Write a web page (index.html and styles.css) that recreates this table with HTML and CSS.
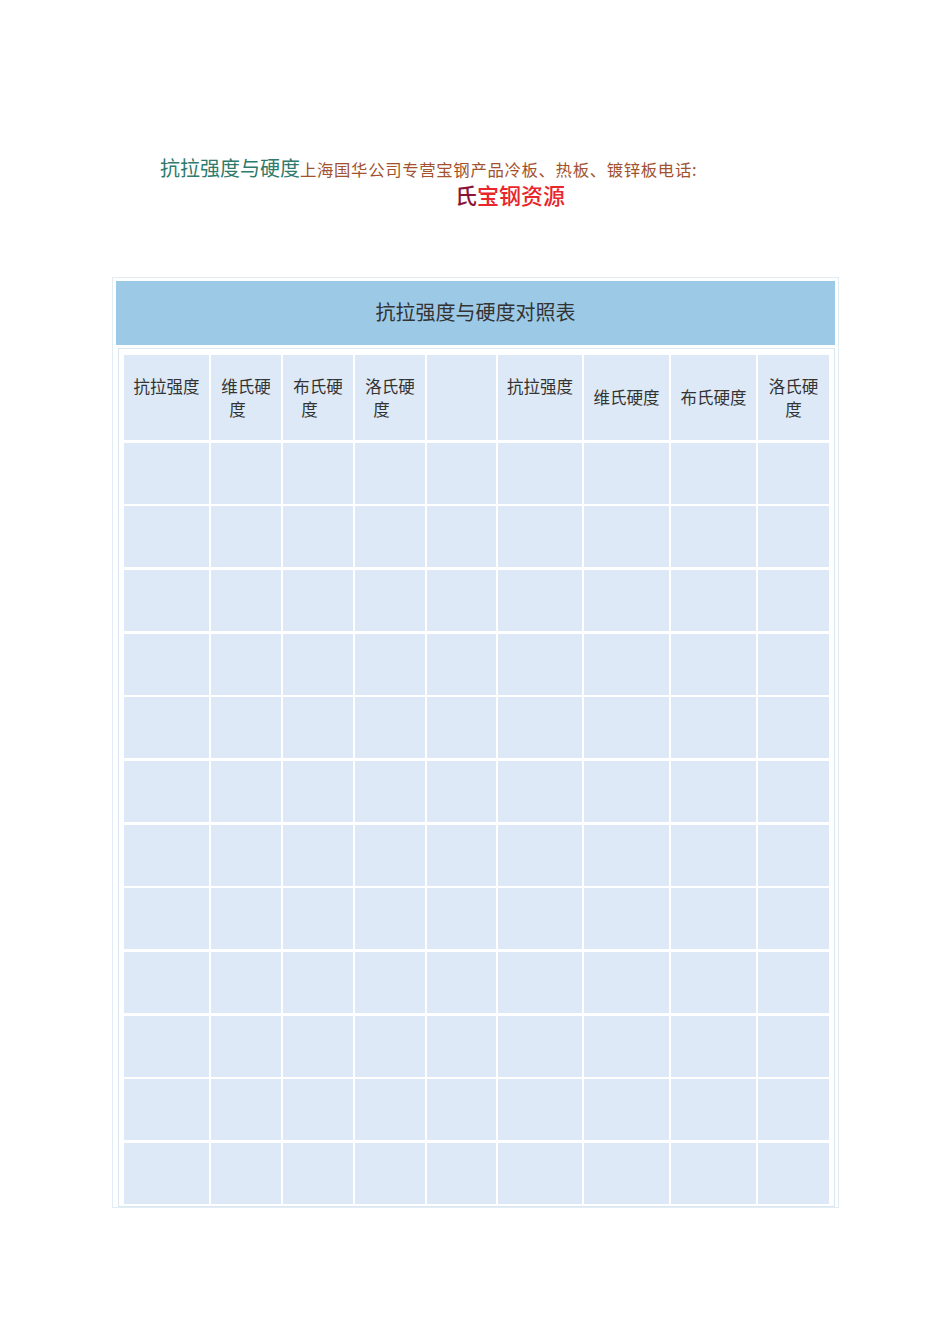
FILE: index.html
```html
<!DOCTYPE html>
<html lang="zh-CN">
<head>
<meta charset="utf-8">
<title>抗拉强度与硬度对照表</title>
<link rel="stylesheet" href="styles.css">
</head>
<body>
<div class="intro">
  <p class="line1"><span class="green">抗拉强度与硬度</span><span class="brown">上海国华公司专营宝钢产品冷板、热板、镀锌板电话:</span></p>
  <p class="line2"><span class="dark">氏</span>宝钢资源</p>
</div>

<div class="sheet">
  <div class="caption">抗拉强度与硬度对照表</div>
  <div class="wrap">
    <div class="grid">
      <div class="cell head top"><span>抗拉强度</span></div>
      <div class="cell head"><span>维氏硬<br><span class="sh">度</span></span></div>
      <div class="cell head"><span>布氏硬<br><span class="sh">度</span></span></div>
      <div class="cell head"><span>洛氏硬<br><span class="sh">度</span></span></div>
      <div class="cell head"></div>
      <div class="cell head top"><span>抗拉强度</span></div>
      <div class="cell head"><span>维氏硬度</span></div>
      <div class="cell head"><span>布氏硬度</span></div>
      <div class="cell head"><span>洛氏硬<br>度</span></div>

      <div class="cell"></div><div class="cell"></div><div class="cell"></div><div class="cell"></div><div class="cell"></div><div class="cell"></div><div class="cell"></div><div class="cell"></div><div class="cell"></div>
      <div class="cell"></div><div class="cell"></div><div class="cell"></div><div class="cell"></div><div class="cell"></div><div class="cell"></div><div class="cell"></div><div class="cell"></div><div class="cell"></div>
      <div class="cell"></div><div class="cell"></div><div class="cell"></div><div class="cell"></div><div class="cell"></div><div class="cell"></div><div class="cell"></div><div class="cell"></div><div class="cell"></div>
      <div class="cell"></div><div class="cell"></div><div class="cell"></div><div class="cell"></div><div class="cell"></div><div class="cell"></div><div class="cell"></div><div class="cell"></div><div class="cell"></div>
      <div class="cell"></div><div class="cell"></div><div class="cell"></div><div class="cell"></div><div class="cell"></div><div class="cell"></div><div class="cell"></div><div class="cell"></div><div class="cell"></div>
      <div class="cell"></div><div class="cell"></div><div class="cell"></div><div class="cell"></div><div class="cell"></div><div class="cell"></div><div class="cell"></div><div class="cell"></div><div class="cell"></div>
      <div class="cell"></div><div class="cell"></div><div class="cell"></div><div class="cell"></div><div class="cell"></div><div class="cell"></div><div class="cell"></div><div class="cell"></div><div class="cell"></div>
      <div class="cell"></div><div class="cell"></div><div class="cell"></div><div class="cell"></div><div class="cell"></div><div class="cell"></div><div class="cell"></div><div class="cell"></div><div class="cell"></div>
      <div class="cell"></div><div class="cell"></div><div class="cell"></div><div class="cell"></div><div class="cell"></div><div class="cell"></div><div class="cell"></div><div class="cell"></div><div class="cell"></div>
      <div class="cell"></div><div class="cell"></div><div class="cell"></div><div class="cell"></div><div class="cell"></div><div class="cell"></div><div class="cell"></div><div class="cell"></div><div class="cell"></div>
      <div class="cell"></div><div class="cell"></div><div class="cell"></div><div class="cell"></div><div class="cell"></div><div class="cell"></div><div class="cell"></div><div class="cell"></div><div class="cell"></div>
      <div class="cell"></div><div class="cell"></div><div class="cell"></div><div class="cell"></div><div class="cell"></div><div class="cell"></div><div class="cell"></div><div class="cell"></div><div class="cell"></div>
    </div>
  </div>
</div>
</body>
</html>
```

FILE: styles.css
```css
html, body {
  margin: 0;
  padding: 0;
  background: #ffffff;
}

body {
  font-family: "Noto Sans CJK SC", "Noto Sans", sans-serif;
  color: #333333;
}

.intro {
  padding-top: 155px;
  height: 277px;
  box-sizing: border-box;
}

.line1 {
  margin: 0 0 0 160px;
  line-height: 26px;
  white-space: nowrap;
}

.green {
  color: #2e7a6c;
  font-size: 20px;
}

.brown {
  color: #a2522f;
  font-size: 16.4px;
  letter-spacing: 0.65px;
}

.line2 {
  margin: 0 0 0 455px;
  line-height: 24px;
  font-size: 22px;
  color: #e8262c;
  font-weight: 500;
}

.dark {
  color: #8a1436;
}

.sheet {
  margin-left: 112px;
  width: 727px;
  box-sizing: border-box;
  border: 1px solid #e2ecf4;
  padding: 3px 3px 0 3px;
}

.caption {
  height: 64px;
  padding-bottom: 4px;
  box-sizing: border-box;
  background: #9cc9e6;
  display: flex;
  align-items: center;
  justify-content: center;
  font-size: 20px;
  color: #333333;
}

.wrap {
  margin: 3px 0 0 2px;
  border: 1px solid #dae7f2;
  padding: 6px 5px 2px 5px;
}

.grid {
  display: grid;
  grid-template-columns: 85px 70px 70px 70px 69px 84px 85px 85px 71px;
  grid-template-rows: 85px;
  grid-auto-rows: 61px;
  column-gap: 2px;
  row-gap: 2.67px;
}

.cell {
  background: #dde9f6;
}

.head {
  display: flex;
  align-items: center;
  justify-content: center;
  text-align: center;
  font-size: 16.5px;
  line-height: 23px;
  color: #333333;
}

.head.top {
  align-items: flex-start;
  padding-top: 20px;
  box-sizing: border-box;
}

.sh {
  padding-right: 17px;
}
```
